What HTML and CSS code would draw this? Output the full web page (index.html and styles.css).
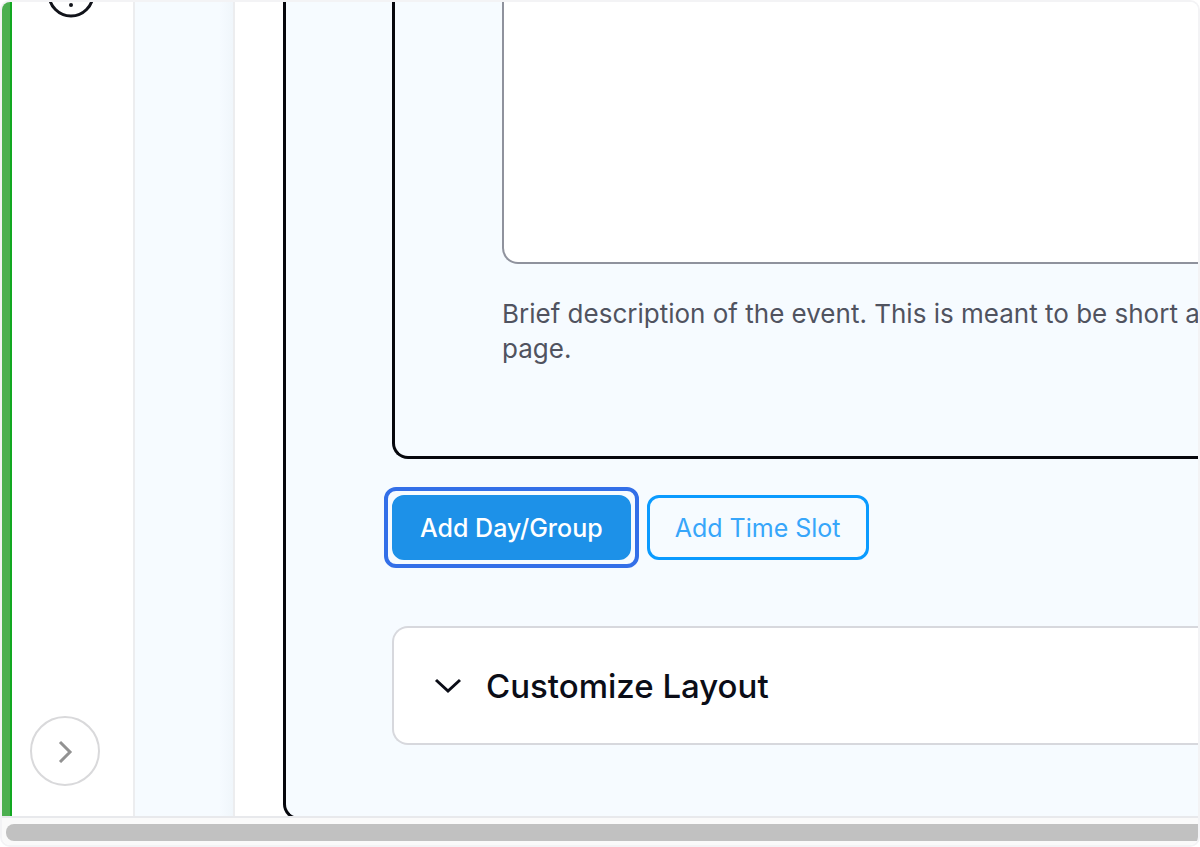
FILE: index.html
```html
<!DOCTYPE html>
<html lang="en">
<head>
    <meta charset="UTF-8">
    <meta name="viewport" content="width=device-width, initial-scale=1.0">
    <title>Event Schedule</title>
    <link rel="stylesheet" href="styles.css">
</head>
<body>
    <div class="frame">
        <div class="workspace">
            <div class="accent"></div>

            <nav class="rail" aria-label="Sidebar">
                <a href="#" class="help-link" aria-label="Help">
                    <svg width="48" height="16" viewBox="0 0 48 16" fill="none">
                        <circle cx="24" cy="-8" r="22" stroke="#11131a" stroke-width="3"/>
                        <circle cx="24" cy="3" r="2" fill="#11131a"/>
                    </svg>
                </a>
                <button type="button" class="expand-button" aria-label="Expand sidebar">
                    <svg width="24" height="24" viewBox="0 0 24 24" fill="none" stroke="#929292" stroke-width="3">
                        <path d="M7 3l10 10-10 10"/>
                    </svg>
                </button>
            </nav>

            <div class="gutter"></div>

            <main class="content">
                <div class="panel">
                    <section class="day-card">
                        <textarea id="description" class="description" aria-label="Description" aria-describedby="descriptionHelp"></textarea>
                        <p id="descriptionHelp" class="help-text">Brief description of the event. This is meant to be short a<br>page.</p>
                    </section>

                    <div class="actions">
                        <button type="button" class="btn btn-primary">Add Day/Group</button>
                        <button type="button" class="btn btn-outline">Add Time Slot</button>
                    </div>

                    <button type="button" class="accordion" aria-expanded="false">
                        <svg width="28" height="28" viewBox="0 0 28 28" fill="none" stroke="#0b0d17" stroke-width="3">
                            <path d="M2 8l12 11L26 8"/>
                        </svg>
                        Customize Layout
                    </button>
                </div>
            </main>
        </div>

        <div class="scrollbar">
            <div class="scroll-thumb"></div>
        </div>
    </div>
</body>
</html>
```
FILE: styles.css
```css
* {
    box-sizing: border-box;
}

body {
    margin: 0;
    background-color: #FFFFFF;
    color: #0B0D17;
    font-family: Inter, 'Liberation Sans', sans-serif;
}

button {
    font-family: inherit;
    cursor: pointer;
}

.frame {
    display: flex;
    flex-direction: column;
    height: 100vh;
    border: 2px solid #F3F3F5;
    border-radius: 10px;
    overflow: hidden;
}

.workspace {
    display: flex;
    flex: 1;
    min-height: 0;
    overflow: hidden;
}

/* Sidebar */
.accent {
    flex: 0 0 10px;
    background-color: #4CAF50;
    border-right: 2px solid #12A821;
}

.rail {
    display: flex;
    flex: 0 0 123px;
    flex-direction: column;
    justify-content: space-between;
    padding: 0 0 30px 18px;
    border-right: 2px solid #ECEDEF;
}

.help-link {
    padding-left: 17px;
    line-height: 0;
}

.expand-button {
    display: flex;
    justify-content: center;
    align-items: center;
    width: 70px;
    height: 70px;
    padding: 0;
    background-color: #FFFFFF;
    border: 2px solid #D9D9DB;
    border-radius: 50%;
}

.gutter {
    flex: 0 0 100px;
    background: linear-gradient(to left, #F0F6FB, #F6FBFF 14px);
    border-right: 2px solid #ECEDEF;
}

/* Schedule form */
.content {
    flex: 1;
    min-width: 0;
    padding-left: 48px;
}

.panel {
    height: calc(100% + 4px);
    padding-left: 106px;
    background-color: #F6FBFF;
    border: 3px solid #06070D;
    border-width: 0 0 3px 3px;
    border-radius: 0 0 0 16px;
}

.day-card {
    height: 457px;
    padding-left: 107px;
    border: 3px solid #06070D;
    border-width: 0 0 3px 3px;
    border-radius: 0 0 0 16px;
    overflow: hidden;
}

.description {
    display: block;
    width: 100%;
    height: 262px;
    background-color: #FFFFFF;
    border: 2px solid #8F929D;
    border-width: 0 0 2px 2px;
    border-radius: 0 0 0 16px;
    outline: none;
    resize: none;
}

.help-text {
    margin: 32px 0 0;
    color: #50535F;
    font-size: 26px;
    line-height: 35px;
    white-space: nowrap;
}

.actions {
    display: flex;
    gap: 16px;
    padding: 36px 0 66px;
}

.btn {
    position: relative;
    height: 65px;
    padding: 0 25px;
    border: 3px solid #0A9BFF;
    border-radius: 12px;
    font-size: 25px;
    white-space: nowrap;
}

.btn-primary {
    background-color: #1D91E8;
    border-color: #1D91E8;
    color: #FFFFFF;
    font-weight: 500;
}

/* Focus ring */
.btn-primary::after {
    content: '';
    position: absolute;
    inset: -11px;
    border: 4px solid #336FE8;
    border-radius: 12px;
}

.btn-outline {
    background-color: #F6FBFF;
    color: #37A6FA;
}

.accordion {
    display: flex;
    align-items: center;
    gap: 24px;
    width: 100%;
    height: 119px;
    padding: 0 40px;
    background-color: #FFFFFF;
    border: 2px solid #D7D8DD;
    border-right: 0;
    border-radius: 16px 0 0 16px;
    color: #0B0D17;
    font-size: 33px;
    font-weight: 500;
}

/* Horizontal scrollbar */
.scrollbar {
    flex: 0 0 29px;
    padding: 6px 0 0 4px;
    background-color: #FAFAFA;
    border-top: 2px solid #E8E9EC;
}

.scroll-thumb {
    height: 17px;
    background-color: #C1C1C1;
    border-radius: 8px 0 0 8px;
}
```
